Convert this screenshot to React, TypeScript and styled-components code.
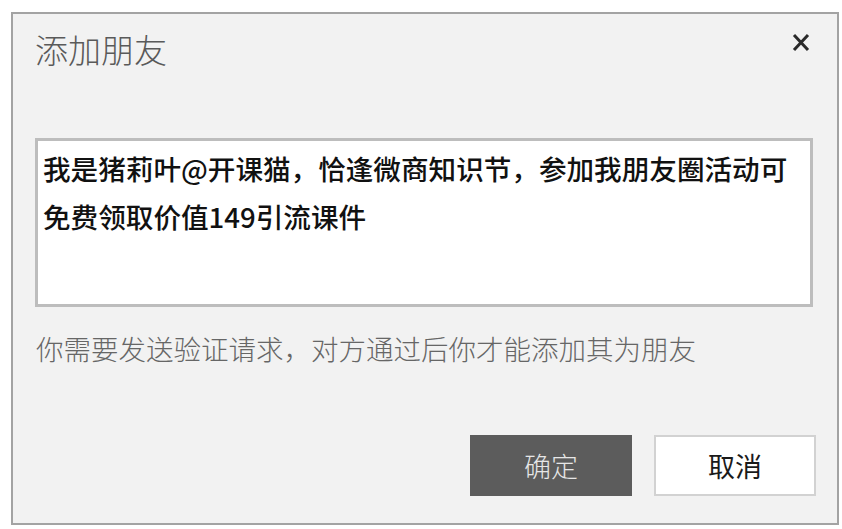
import React from "react";
import styled, { createGlobalStyle } from "styled-components";

const Global = createGlobalStyle`
  html, body { margin: 0; padding: 0; background: #ffffff; }
  body { font-family: "Noto Sans CJK SC", "Noto Sans", sans-serif; }
  * { box-sizing: border-box; }
`;

const Page = styled.div`
  width: 842px;
  height: 529px;
  padding: 12px 3px 4px 11px;
`;

const Dialog = styled.div`
  width: 828px;
  height: 513px;
  background: #f2f2f2;
  border: 2px solid #a3a3a3;
  display: flex;
  flex-direction: column;
`;

const Header = styled.div`
  display: flex;
  align-items: center;
  justify-content: space-between;
  height: 70px;
  padding: 0 27px 0 22px;
`;

const Title = styled.h1`
  margin: 0;
  font-size: 33px;
  line-height: 40px;
  font-weight: 300;
  color: #5a5a5a;
  font-family: "Noto Sans CJK SC", sans-serif;
`;

const Close = styled.button`
  align-self: flex-start;
  margin-top: 19px;
  border: 0;
  background: none;
  padding: 0;
  width: 18px;
  height: 19px;
  display: flex;
  cursor: pointer;
`;

const Message = styled.div`
  margin: 54px 24px 0 22px;
  height: 169px;
  background: #ffffff;
  border: 3px solid #bdbdbd;
  padding: 3px 5px;
  font-size: 27.6px;
  line-height: 48px;
  font-weight: 500;
  color: #111;
  white-space: nowrap;
`;

const Hint = styled.p`
  margin: 21px 0 0 23px;
  font-size: 27.5px;
  line-height: 40px;
  font-weight: 300;
  color: #666;
`;

const Actions = styled.div`
  margin-top: auto;
  display: flex;
  justify-content: flex-end;
  gap: 22px;
  padding: 0 21px 27px 0;
`;

const Button = styled.button<{ $primary?: boolean }>`
  width: 162px;
  height: 61px;
  font-family: "Noto Sans CJK SC", sans-serif;
  font-size: 27px;
  font-weight: ${(p) => (p.$primary ? 300 : 400)};
  background: ${(p) => (p.$primary ? "#5c5c5c" : "#ffffff")};
  color: ${(p) => (p.$primary ? "#e6e6e6" : "#1a1a1a")};
  border: ${(p) => (p.$primary ? "none" : "2px solid #d2d2d2")};
  cursor: pointer;
`;

export default function App() {
  return (
    <>
      <Global />
      <Page>
        <Dialog>
          <Header>
            <Title>添加朋友</Title>
            <Close aria-label="关闭">
              <svg width="18" height="19" viewBox="0 0 18 19">
                <path d="M2 2 L16 17 M16 2 L2 17" stroke="#2a2a2a" strokeWidth="3" />
              </svg>
            </Close>
          </Header>
          <Message>
            我是猪莉叶@开课猫，恰逢微商知识节，参加我朋友圈活动可
            <br />
            免费领取价值149引流课件
          </Message>
          <Hint>你需要发送验证请求，对方通过后你才能添加其为朋友</Hint>
          <Actions>
            <Button $primary>确定</Button>
            <Button>取消</Button>
          </Actions>
        </Dialog>
      </Page>
    </>
  );
}
